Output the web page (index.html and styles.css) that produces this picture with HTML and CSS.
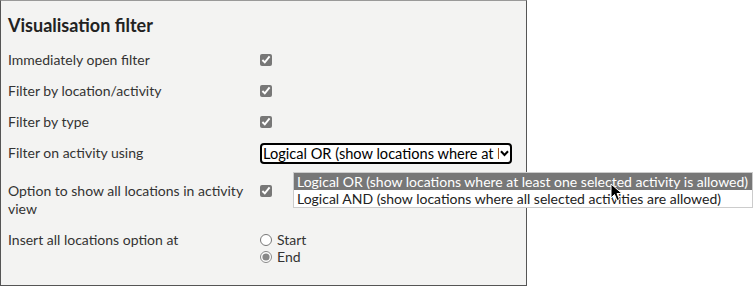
FILE: index.html
```html
<!DOCTYPE html>
<html lang="en">
<head>
    <meta charset="UTF-8">
    <title>Visualisation filter</title>
    <link rel="stylesheet" href="styles.css">
</head>
<body>
    <div class="panel">
        <h2 class="title">Visualisation filter</h2>

        <div class="rows">
            <div class="row">
                <label class="label">Immediately open filter</label>
                <div class="ctrl"><input type="checkbox" checked></div>
            </div>
            <div class="row">
                <label class="label">Filter by location/activity</label>
                <div class="ctrl"><input type="checkbox" checked></div>
            </div>
            <div class="row">
                <label class="label">Filter by type</label>
                <div class="ctrl"><input type="checkbox" checked></div>
            </div>
            <div class="row row-select">
                <label class="label">Filter on activity using</label>
                <div class="ctrl">
                    <div class="select">
                        <span class="select-text">Logical OR (show locations where at least one selected activity is allowed)</span>
                        <svg class="chevron" width="9" height="7" viewBox="0 0 9 7">
                            <path d="M1 1.2 L4.5 5 L8 1.2" fill="none" stroke="#000" stroke-width="2"/>
                        </svg>
                    </div>
                </div>
            </div>
            <div class="row">
                <label class="label">Option to show all locations in activity view</label>
                <div class="ctrl"><input type="checkbox" checked></div>
            </div>
            <div class="row">
                <label class="label">Insert all locations option at</label>
                <div class="ctrl radios">
                    <label class="radio"><input type="radio" name="pos"> Start</label>
                    <label class="radio"><input type="radio" name="pos" checked> End</label>
                </div>
            </div>
        </div>
    </div>

    <div class="dropdown">
        <div class="opt selected">Logical OR (show locations where at least one selected activity is allowed)</div>
        <div class="opt">Logical AND (show locations where all selected activities are allowed)</div>
    </div>

    <svg class="cursor" width="14" height="20" viewBox="0 0 14 20">
        <path d="M1 1 L1 15 L4.5 11.5 L7 17.5 L9.5 16.5 L7 10.5 L12 10.5 Z" fill="#000" stroke="#fff" stroke-width="1"/>
    </svg>
</body>
</html>
```

FILE: styles.css
```css
*{
    margin: 0;
    padding: 0;
    box-sizing: border-box;
}

body{
    background: #fff;
    font-family: Lato, "Liberation Sans", sans-serif;
    font-size: 14px;
    color: #333;
}

.panel{
    width: 527px;
    height: 286px;
    background: #f3f3f2;
    border: 1px solid #555;
    border-top-color: #999;
    padding: 12px 7px 0;
}

.title{
    font-size: 18px;
    font-weight: 700;
    color: #222;
    line-height: 24px;
    margin-bottom: 14px;
}

.row{
    display: grid;
    grid-template-columns: 252px 1fr;
    line-height: 18px;
    padding-bottom: 13px;
}

.row-select{
    padding-bottom: 18px;
}

.ctrl{
    display: flex;
    align-items: flex-start;
}

.ctrl input[type="checkbox"]{
    width: 12px;
    height: 12px;
    margin: 3px 0 0 0;
    accent-color: #777;
}

.select{
    display: flex;
    align-items: center;
    width: 252px;
    height: 21px;
    margin-top: -1px;
    border: 2px solid #000;
    border-radius: 4px;
    background: #fff;
    padding-left: 1px;
}

.select-text{
    flex: 1;
    overflow: hidden;
    white-space: nowrap;
    font-size: 14.6px;
    color: #000;
}

.chevron{
    flex: none;
    margin: 0 1px 0 1px;
}

.radios{
    flex-direction: column;
}

.radio{
    display: flex;
    align-items: center;
    gap: 5px;
    line-height: 17px;
}

.radio input{
    width: 12px;
    height: 12px;
    margin: 0;
    accent-color: #888;
}

.dropdown{
    position: absolute;
    left: 293px;
    top: 172px;
    width: 460px;
    background: #fff;
    border: 1px solid #ccc;
    color: #222;
    line-height: 17px;
}

.opt{
    padding: 0 3px;
    white-space: nowrap;
}

.opt.selected{
    background: #777;
    color: #fff;
}

.cursor{
    position: absolute;
    left: 610px;
    top: 183px;
}
```
